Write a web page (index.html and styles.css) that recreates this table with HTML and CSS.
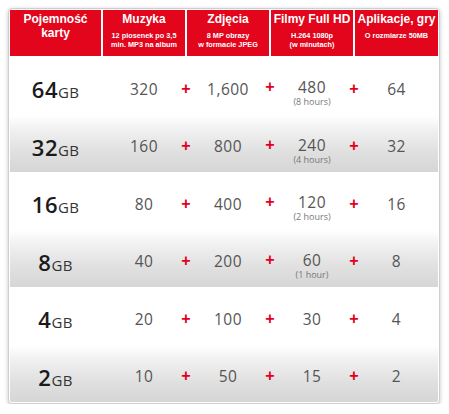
FILE: index.html
```html
<!DOCTYPE html>
<html lang="pl">
<head>
<meta charset="utf-8">
<title>Pojemność karty</title>
<link rel="stylesheet" href="styles.css">
</head>
<body>
<div class="box">
  <div class="head">
    <div class="hcell"><div class="htitle">Pojemność karty</div></div>
    <div class="hcell"><div class="htitle">Muzyka</div><div class="hsub">12 piosenek po 3,5<br>min. MP3 na album</div></div>
    <div class="hcell"><div class="htitle">Zdjęcia</div><div class="hsub">8 MP obrazy<br>w formacie JPEG</div></div>
    <div class="hcell"><div class="htitle">Filmy Full HD</div><div class="hsub">H.264 1080p<br>(w minutach)</div></div>
    <div class="hcell"><div class="htitle">Aplikacje, gry</div><div class="hsub">O rozmiarze 50MB</div></div>
  </div>

  <div class="row">
    <div class="cap"><span class="big">64</span><span class="gb">GB</span></div>
    <div class="num">320</div>
    <div class="num plus">1,600</div>
    <div class="num plus"><div>480</div><div class="note">(8 hours)</div></div>
    <div class="num plus">64</div>
  </div>
  <div class="row alt">
    <div class="cap"><span class="big">32</span><span class="gb">GB</span></div>
    <div class="num">160</div>
    <div class="num plus">800</div>
    <div class="num plus"><div>240</div><div class="note">(4 hours)</div></div>
    <div class="num plus">32</div>
  </div>
  <div class="row">
    <div class="cap"><span class="big">16</span><span class="gb">GB</span></div>
    <div class="num">80</div>
    <div class="num plus">400</div>
    <div class="num plus"><div>120</div><div class="note">(2 hours)</div></div>
    <div class="num plus">16</div>
  </div>
  <div class="row alt">
    <div class="cap"><span class="big">8</span><span class="gb">GB</span></div>
    <div class="num">40</div>
    <div class="num plus">200</div>
    <div class="num plus"><div>60</div><div class="note">(1 hour)</div></div>
    <div class="num plus">8</div>
  </div>
  <div class="row">
    <div class="cap"><span class="big">4</span><span class="gb">GB</span></div>
    <div class="num">20</div>
    <div class="num plus">100</div>
    <div class="num plus">30</div>
    <div class="num plus">4</div>
  </div>
  <div class="row alt last">
    <div class="cap"><span class="big">2</span><span class="gb">GB</span></div>
    <div class="num">10</div>
    <div class="num plus">50</div>
    <div class="num plus">15</div>
    <div class="num plus">2</div>
  </div>
</div>
</body>
</html>
```
FILE: styles.css
```css
html, body {
  margin: 0;
  padding: 0;
  background: #ffffff;
}
body {
  padding: 8px 0 0 8px;
  font-family: "Open Sans", "Liberation Sans", sans-serif;
}
.box {
  box-sizing: border-box;
  width: 432px;
  padding: 1px;
  border: 1px solid #cfcfcf;
  border-radius: 4px;
  background: #ffffff;
  box-shadow: 0 1px 4px rgba(0, 0, 0, 0.22);
}
.head,
.row {
  display: grid;
  grid-template-columns: 91px 82px 82px 82px 83px;
  column-gap: 2px;
}
.head {
  height: 46px;
  margin-bottom: 1px;
}
.hcell {
  background: #e2051b;
  color: #ffffff;
  font-family: "Liberation Sans", Arial, sans-serif;
  font-weight: bold;
  text-align: center;
  padding-top: 2px;
}
.htitle {
  font-size: 12px;
  line-height: 14px;
}
.hsub {
  font-size: 7.3px;
  line-height: 9px;
  margin-top: 5px;
}
.row {
  height: 57.5px;
  box-sizing: border-box;
  padding-top: 7px;
  align-items: center;
}
.row.alt {
  background: linear-gradient(to bottom, #ffffff 0%, #f1f1f1 25%, #e0e0e0 65%, #d6d6d6 100%);
}
.row.last {
  border-radius: 0 0 2px 2px;
}
.cap {
  text-align: center;
  color: #1a1a1a;
  white-space: nowrap;
}
.big {
  font-size: 22px;
  font-weight: 600;
  letter-spacing: 0.5px;
}
.gb {
  font-size: 15px;
  color: #333333;
  letter-spacing: 0.3px;
}
.num {
  position: relative;
  text-align: center;
  font-size: 15.5px;
  line-height: 13px;
  color: #555555;
  letter-spacing: 0.5px;
}
.note {
  height: 0;
  font-size: 9px;
  line-height: 9px;
  letter-spacing: 0;
  color: #777777;
  margin-top: 3px;
}
.plus::before {
  content: "+";
  position: absolute;
  left: -1px;
  top: -1px;
  transform: translateX(-50%);
  font-family: "Liberation Sans", Arial, sans-serif;
  font-weight: bold;
  font-size: 16px;
  line-height: 14px;
  color: #e3001b;
  letter-spacing: 0;
}
```
